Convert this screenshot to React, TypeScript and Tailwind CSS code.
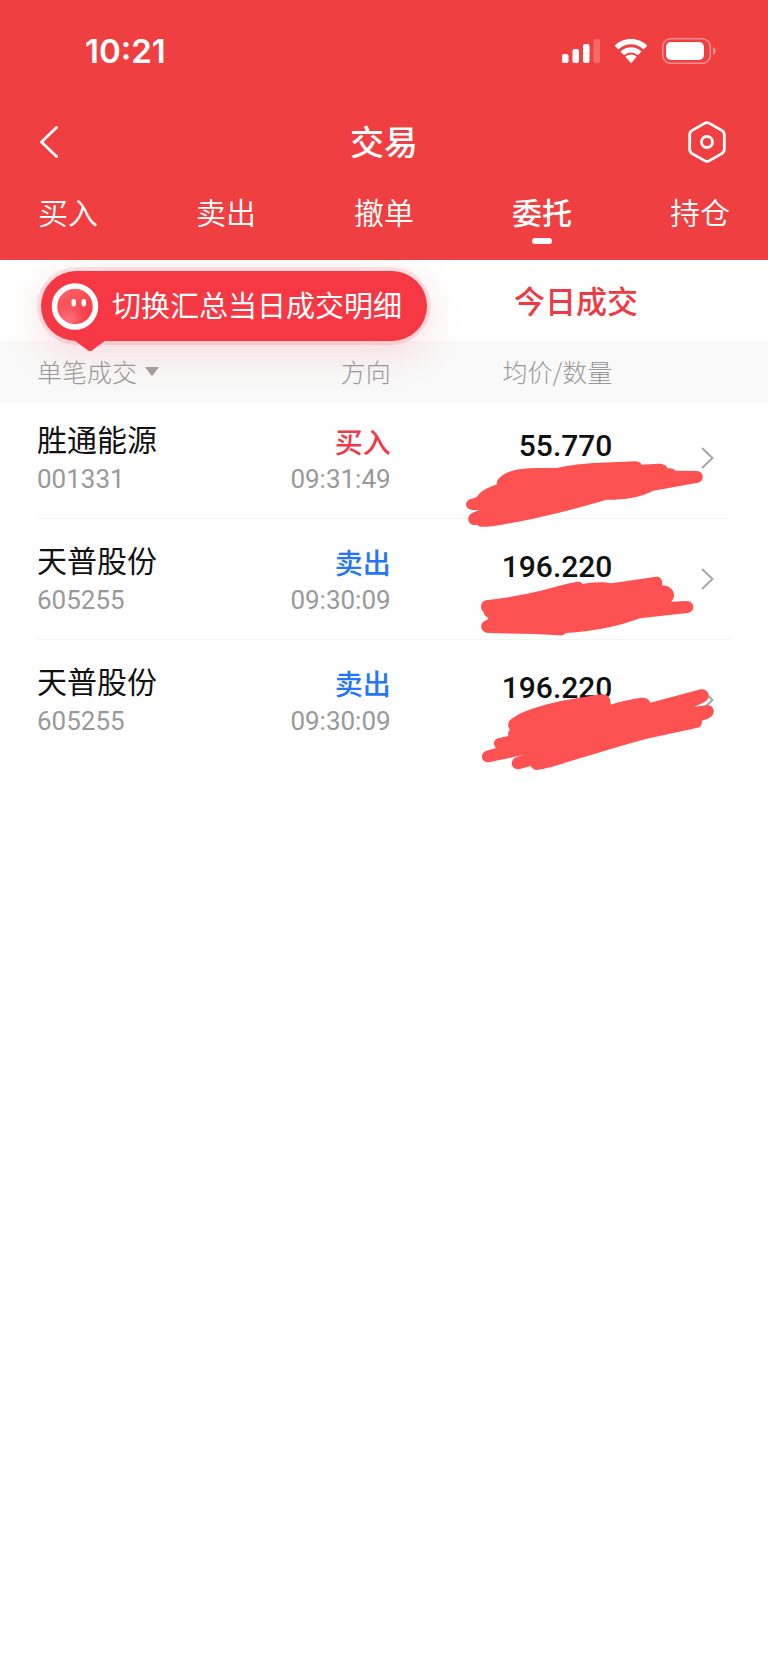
import { useState } from "react";

type Trade = {
  name: string;
  code: string;
  side: "buy" | "sell";
  time: string;
  price: string;
  markBox: string;
  mark: string;
};

const navItems = ["买入", "卖出", "撤单", "委托", "持仓"];

const trades: Trade[] = [
  {
    name: "胜通能源",
    code: "001331",
    side: "buy",
    time: "09:31:49",
    price: "55.770",
    markBox: "75 123 774 264",
    mark: "M96 296C106 294 112 290 118 281C131 268 150 261 171 253C168 240 180 230 195 221C220 208 255 205 285 204L350 204C390 195 430 190 480 188L585 184C596 184 603 188 605 194L655 191C670 191 680 196 683 205C693 203 703 206 706 212L770 213C793 214 794 244 774 248L640 272C600 292 560 299 500 299C400 329 300 354 210 370C170 378 140 382 122 380C117 379 114 376 112 374L98 375C80 370 80 345 98 338L118 330L98 330C72 328 72 300 96 296Z",
  },
  {
    name: "天普股份",
    code: "605255",
    side: "sell",
    time: "09:30:09",
    price: "196.220",
    markBox: "75 6 774 264",
    mark: "M138 121C210 112 270 102 330 85C365 75 390 69 408 66C418 64 425 67 428 72C455 66 490 64 515 70L648 50C662 49 669 60 666 76C688 76 703 91 702 107C701 115 698 120 693 125L740 123C765 123 768 156 742 159L600 175C530 201 460 214 378 219C374 225 366 227 355 226L285 222L145 219C118 216 116 186 142 180L145 173C136 170 131 163 131 157C119 147 120 125 138 121Z",
  },
  {
    name: "天普股份",
    code: "605255",
    side: "sell",
    time: "09:30:09",
    price: "196.220",
    markBox: "75 369 774 264",
    mark: "M213 478C245 451 320 430 400 416L485 403C503 402 513 413 512 434C540 425 570 418 598 414C616 411 626 417 631 428L782 388C804 384 814 410 799 422C788 429 775 435 762 441L802 435C826 436 829 467 803 476L786 482C787 494 782 501 770 504L620 536C550 555 460 582 390 604C350 617 315 627 290 630C280 629 275 624 272 618L237 628C212 629 208 600 228 592L252 584L147 607C121 608 119 580 139 572L168 564C157 552 161 537 177 534L205 528C203 519 205 513 210 509C202 500 203 486 213 478Z",
  },
];

function SignalIcon() {
  return (
    <svg viewBox="0 0 38 24" className="h-6 w-[38px]" fill="white" aria-hidden="true">
      <rect y="15" width="6.5" height="9" rx="2" />
      <rect x="10.5" y="10" width="6.5" height="14" rx="2" />
      <rect x="21" y="5" width="6.5" height="19" rx="2" />
      <rect x="31.5" width="6.5" height="24" rx="2" opacity=".22" />
    </svg>
  );
}

function WifiIcon() {
  return (
    <svg viewBox="0 0 34 25" className="h-[25px] w-[34px]" fill="white" aria-hidden="true">
      <path d="M17 5.2c4.6 0 8.8 1.8 11.9 4.7.3.3.8.3 1.1 0l2.8-2.7c.3-.3.3-.8 0-1.1C28.7 2.3 23.1 0 17 0S5.3 2.3 1.2 6.1c-.3.3-.3.8 0 1.1L4 9.9c.3.3.8.3 1.1 0C8.2 7 12.4 5.2 17 5.2Z" />
      <path d="M17 13.4c2.4 0 4.6.9 6.3 2.4.3.3.8.3 1.1 0l2.6-2.7c.3-.3.3-.8 0-1.1C24.3 9.6 20.8 8.2 17 8.2S9.7 9.6 7 12c-.3.3-.3.8 0 1.1l2.6 2.7c.3.3.8.3 1.1 0 1.7-1.5 3.9-2.4 6.3-2.4Z" />
      <path d="M22.2 18.3c.3-.3.3-.8 0-1.1-1.4-1.1-3.2-1.8-5.2-1.8s-3.8.7-5.2 1.8c-.3.3-.3.8 0 1.1l4.7 5.5c.3.3.7.3 1 0Z" />
    </svg>
  );
}

function BatteryIcon() {
  return (
    <svg viewBox="0 0 54 26" className="h-[26px] w-[54px]" fill="none" aria-hidden="true">
      <rect x=".75" y=".75" width="47.5" height="24.5" rx="8" stroke="white" strokeWidth="1.5" opacity=".42" />
      <rect x="4" y="4" width="38" height="18" rx="5" fill="white" />
      <path d="M51 9c3.5 1.5 3.5 6.5 0 8Z" fill="white" opacity=".45" />
    </svg>
  );
}

function MascotIcon() {
  return (
    <svg viewBox="0 0 48 48" className="size-12 shrink-0" aria-hidden="true">
      <defs>
        <linearGradient id="face" x1=".2" y1="0" x2=".7" y2="1">
          <stop offset="0" stopColor="#fc6a70" />
          <stop offset=".55" stopColor="#f9444f" />
          <stop offset="1" stopColor="#f53c47" />
        </linearGradient>
        <radialGradient id="glow" cx=".35" cy=".8" r=".4">
          <stop offset="0" stopColor="#ff9498" stopOpacity=".6" />
          <stop offset="1" stopColor="#ff9498" stopOpacity="0" />
        </radialGradient>
      </defs>
      <circle cx="24" cy="24.5" r="20.5" fill="url(#face)" />
      <circle cx="24" cy="24.5" r="20.5" fill="url(#glow)" stroke="white" strokeWidth="5.5" />
      <rect x="20.5" y="17" width="4.5" height="7.5" rx="2.2" fill="white" />
      <rect x="30.5" y="17" width="4.5" height="7.5" rx="2.2" fill="white" />
    </svg>
  );
}

function Header() {
  const [active, setActive] = useState("委托");

  return (
    <header className="relative z-20 bg-[#f03f41] text-white">
      <div className="flex h-[102px] items-center justify-between pr-[52px] pl-[85px]">
        <span className="pt-0.5 font-['Inter',sans-serif] text-[33px] font-semibold">10:21</span>
        <div className="flex items-center">
          <SignalIcon />
          <span className="ml-[14px]">
            <WifiIcon />
          </span>
          <span className="ml-[14px]">
            <BatteryIcon />
          </span>
        </div>
      </div>

      <div className="grid h-20 grid-cols-3 items-center px-[40px]">
        <button type="button" aria-label="返回" className="justify-self-start">
          <svg viewBox="0 0 18 32" className="h-8 w-[18px]" fill="none" stroke="white" strokeWidth="2.8" strokeLinecap="round" strokeLinejoin="round">
            <path d="M16.5 1.5 1.5 16l15 14.5" />
          </svg>
        </button>
        <h1 className="pb-0.5 text-center text-[34px] leading-10 font-medium">交易</h1>
        <button type="button" aria-label="设置" className="justify-self-end">
          <svg viewBox="0 0 42 42" className="size-[42px]" fill="none" stroke="white" strokeWidth="2.8">
            <path d="M18.5 2.4a5 5 0 0 1 5 0l12.3 7a5 5 0 0 1 2.5 4.3v14.6a5 5 0 0 1-2.5 4.3l-12.3 7a5 5 0 0 1-5 0l-12.3-7a5 5 0 0 1-2.5-4.3V13.7a5 5 0 0 1 2.5-4.3Z" />
            <circle cx="21" cy="21" r="5.5" />
          </svg>
        </button>
      </div>

      <nav className="flex h-[78px] justify-between px-[38px] pt-[9px]">
        {navItems.map((item) => (
          <button
            key={item}
            type="button"
            onClick={() => setActive(item)}
            className={`flex flex-col items-center text-[30px] leading-10 ${
              item === active ? "font-medium" : "font-[350]"
            }`}
          >
            {item}
            {item === active && <span className="mt-[7px] h-[6px] w-5 rounded-full bg-white" />}
          </button>
        ))}
      </nav>
    </header>
  );
}

function SwitchTip() {
  return (
    <div className="absolute top-[11px] left-[41px] z-10 flex h-[70px] items-center rounded-full bg-[#f53844] pr-[25px] pl-[10px] whitespace-nowrap text-white shadow-[0_0_0_4px_rgba(245,56,68,0.13),0_10px_40px_rgba(245,56,68,0.18)]">
      <MascotIcon />
      <span className="ml-[13px] pb-1 text-[29px] leading-10">切换汇总当日成交明细</span>
      <svg viewBox="0 0 32 12" className="absolute top-full left-[33px] -mt-px h-3 w-8" fill="#f53844" aria-hidden="true">
        <path d="M0 0h32L18 10.5q-2 1.5-4 0Z" />
      </svg>
    </div>
  );
}

function TradeRow({ trade, last }: { trade: Trade; last: boolean }) {
  return (
    <tr className="relative h-[121px] align-bottom first:h-[117px]">
      <td className="pb-[21px] pl-[37px]">
        <div className="pb-[3px] text-[30px] leading-[38px] text-[#111]">{trade.name}</div>
        <div className="font-['Roboto',sans-serif] text-[26px] leading-[38px] text-[#999]">{trade.code}</div>
        {!last && <div className="absolute inset-x-[37px] bottom-0 h-px bg-[#f4f4f4]" />}
      </td>
      <td className="pr-px pb-[21px] text-right">
        <div
          className={`text-[28px] leading-[38px] font-medium ${
            trade.side === "buy" ? "text-[#ee3a45]" : "text-[#2476f5]"
          }`}
        >
          {trade.side === "buy" ? "买入" : "卖出"}
        </div>
        <div className="font-['Roboto',sans-serif] text-[26px] leading-[38px] text-[#999]">{trade.time}</div>
      </td>
      <td className="relative pr-0.5 pb-[54px] text-right font-['Roboto',sans-serif] text-[30px] leading-[38px] font-medium text-[#111]">
        {trade.price}
        <svg
          viewBox={trade.markBox}
          className="pointer-events-none absolute -bottom-[10px] left-[73px] z-10 h-[88px] w-[258px] max-w-none"
          fill="#fd5152"
          aria-hidden="true"
        >
          <path d={trade.mark} />
        </svg>
      </td>
      <td className="pr-[54px] pb-[50px]">
        <button type="button" aria-label="查看明细" className="ml-auto block">
          <svg viewBox="0 0 13 22" className="h-[22px] w-[13px]" fill="none" stroke="#a6a6a6" strokeWidth="2">
            <path d="m1 1 10.5 10L1 21" />
          </svg>
        </button>
      </td>
    </tr>
  );
}

export default function App() {
  return (
    <div className="min-h-screen bg-white font-['Noto_Sans_CJK_SC',sans-serif]">
      <Header />

      <main>
        <div className="relative grid h-[81px] grid-cols-2">
          <SwitchTip />
          <button type="button" className="col-start-2 pb-0.5 text-[31px] leading-10 font-medium text-[#ee3a45]">
            今日成交
          </button>
        </div>

        <table className="w-full table-fixed border-collapse">
          <thead className="bg-[#f9f9f9]">
            <tr className="h-[61px] text-[25px] leading-8 text-[#999]">
              <th className="w-[30%] pb-0.5 pl-[37px] text-left font-light">
                <button type="button" className="flex items-center">
                  单笔成交
                  <svg viewBox="0 0 14 9" className="mt-0.5 ml-2 h-[9px] w-[14px]" fill="#a3a0a0" aria-hidden="true">
                    <path d="M1.5 0h11q1.5 0 .6 1.2L8 8q-1 1.2-2 0L.9 1.2Q0 0 1.5 0Z" />
                  </svg>
                </button>
              </th>
              <th className="w-[21%] pr-px pb-0.5 text-right font-light">方向</th>
              <th className="w-[29%] pr-0.5 pb-0.5 text-right font-light">均价/数量</th>
              <th aria-label="明细" />
            </tr>
          </thead>
          <tbody>
            {trades.map((trade, index) => (
              <TradeRow key={index} trade={trade} last={index === trades.length - 1} />
            ))}
          </tbody>
        </table>
      </main>
    </div>
  );
}
